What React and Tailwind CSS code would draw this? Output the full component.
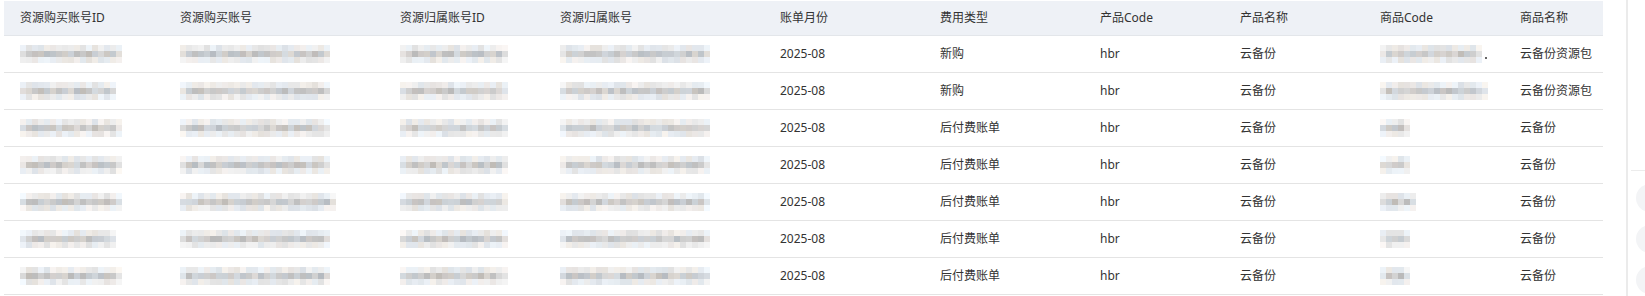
import React from 'react'

const COLUMNS = ['资源购买账号ID', '资源购买账号', '资源归属账号ID', '资源归属账号', '账单月份', '费用类型', '产品Code', '产品名称', '商品Code', '商品名称']

const ROWS = [
  { w: [102, 150, 108, 150, 104], type: '新购', name: '云备份资源包', dot: true },
  { w: [96, 152, 110, 150, 106], type: '新购', name: '云备份资源包' },
  { w: [102, 150, 108, 150, 28], type: '后付费账单', name: '云备份' },
  { w: [104, 150, 110, 150, 28], type: '后付费账单', name: '云备份' },
  { w: [104, 154, 110, 148, 36], type: '后付费账单', name: '云备份' },
  { w: [98, 150, 108, 150, 28], type: '后付费账单', name: '云备份' },
  { w: [102, 150, 108, 150, 28], type: '后付费账单', name: '云备份' },
]

// small seeded random so the blurred blocks look the same every run
function rng(seed) {
  let s = seed
  return () => {
    s = (s * 9301 + 49297) % 233280
    return s / 233280
  }
}

const TINTS = [[0, 0, 0], [0, 0, 0], [5, 1, -4], [-5, 0, 6], [6, 2, 0], [-3, 3, 8]]

function Mosaic({ width, seed, dot }) {
  const rand = rng(seed)
  const cols = Math.max(1, Math.round(width / 6))
  const rows = [0, 1, 2]
  return (
    <div className="flex items-center">
      <div className="flex flex-col">
        {rows.map(r => (
          <div key={r} className="flex">
            {Array.from({ length: cols }).map((_, c) => {
              const edge = c === 0 || c === cols - 1
              let base = r === 1 ? 186 + rand() * 30 : 224 + rand() * 18
              if (edge) base = base + (255 - base) * 0.4
              const t = TINTS[Math.floor(rand() * TINTS.length)]
              const v = k => Math.max(0, Math.min(255, Math.round(base + t[k])))
              return (
                <div
                  key={c}
                  className="w-[6px] h-[6px]"
                  style={{ backgroundColor: `rgb(${v(0)},${v(1)},${v(2)})` }}
                />
              )
            })}
          </div>
        ))}
      </div>
      {dot && <div className="ml-[3px] mt-[8px] w-[2px] h-[2px] bg-[#666]" />}
    </div>
  )
}

const GRID = 'grid grid-cols-[160px_220px_160px_220px_160px_160px_140px_140px_140px_99px]'

export default function App() {
  return (
    <div
      className="w-[1645px] h-[296px] overflow-hidden bg-white flex text-[12px] text-[#333]"
      style={{ fontFamily: '"Noto Sans", "Noto Sans CJK SC", sans-serif' }}
    >
      <div className="pl-[4px] pt-[1px] w-[1603px] shrink-0">
        <div className={`${GRID} h-[35px] bg-[#eef1f6] border-b border-[#e3e6ea]`}>
          {COLUMNS.map(c => (
            <div key={c} className="px-[16px] flex items-center whitespace-nowrap">{c}</div>
          ))}
        </div>
        {ROWS.map((row, i) => (
          <div key={i} className={`${GRID} h-[37px] border-b border-[#e4e4e4]`}>
            {row.w.slice(0, 4).map((w, j) => (
              <div key={j} className="px-[16px] flex items-center">
                <Mosaic width={w} seed={i * 97 + j * 13 + 7} />
              </div>
            ))}
            <div className="px-[16px] flex items-center">2025-08</div>
            <div className="px-[16px] flex items-center">{row.type}</div>
            <div className="px-[16px] flex items-center">hbr</div>
            <div className="px-[16px] flex items-center">云备份</div>
            <div className="px-[16px] flex items-center">
              <Mosaic width={row.w[4]} seed={i * 53 + 211} dot={row.dot} />
            </div>
            <div className="pl-[16px] flex items-center whitespace-nowrap">{row.name}</div>
          </div>
        ))}
      </div>

      <div className="w-[23px] shrink-0" />

      <div className="flex-1 border-l-2 border-[#ebebeb] overflow-hidden">
        <div className="ml-[3px] mt-[170px] w-[40px] h-px bg-[#ececec]" />
        <div className="ml-[8px] mt-[13px] flex flex-col gap-[13px]">
          <div className="w-[28px] h-[28px] rounded-full bg-[#f3f4f6] shrink-0" />
          <div className="w-[28px] h-[28px] rounded-full bg-[#f3f4f6] shrink-0" />
          <div className="w-[28px] h-[28px] rounded-full bg-[#f3f4f6] shrink-0" />
        </div>
      </div>
    </div>
  )
}
